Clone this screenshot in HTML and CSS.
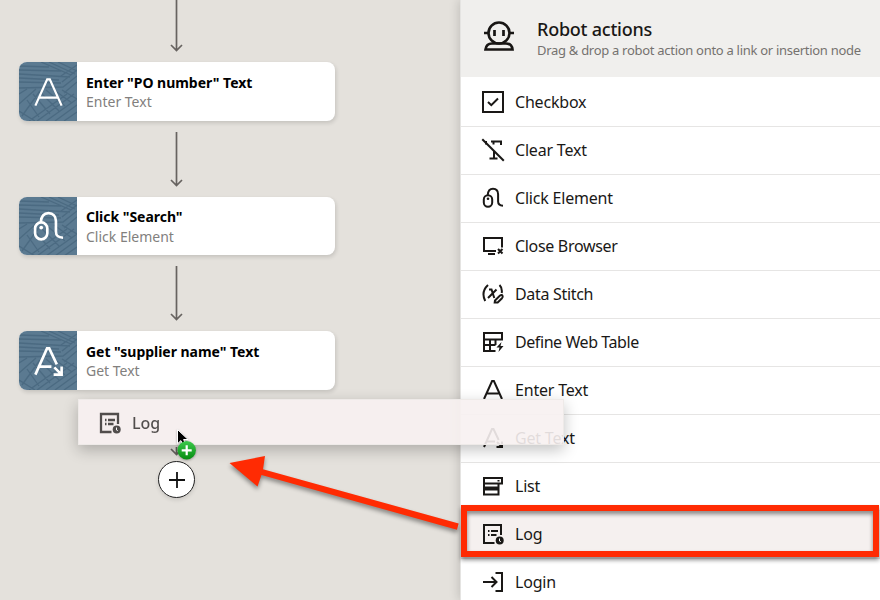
FILE: index.html
```
<!DOCTYPE html>
<html lang="en">
<head>
<meta charset="utf-8">
<title>Robot actions</title>
<link rel="stylesheet" href="styles.css">
</head>
<body>
<svg class="defs" aria-hidden="true">
  <defs>
    <symbol id="checkbox" viewBox="0 0 24 24"><path d="M2 2h20v20H2z"/><path d="m7 12 3.300 3.200L17 8.500"/></symbol>
    <symbol id="clear" viewBox="0 0 24 24"><path d="M1.300 1.300 22.800 22.800"/><path d="M10 3.500h11M20 3v4M12.500 3.500V6.500M13 13v7.500M8.500 20.500h8M5 3v3.500"/></symbol>
    <symbol id="mouse" viewBox="0 0 24 24"><rect x="2.800" y="9.200" width="8.400" height="11.600" rx="4.200"/><path d="M6.700 9.200C7 5 9 2.800 12 2.800c3.200 0 5.100 2.200 5.100 5.500v7.200c0 2.700 1.200 4 4.900 4.200"/><circle class="dot" cx="7" cy="12.700" r="1.300"/></symbol>
    <symbol id="browser" viewBox="0 0 24 24"><path d="M15 17H3V4h18v9.500M7 20h7M17 15l4.500 4.500m0-4.500L17 19.500"/></symbol>
    <symbol id="stitch" viewBox="0 0 24 24"><path d="M7 3C1.700 8 1.200 13 4.200 19M8 7.500h2.500l2.800 8.500M15.500 7.500 7 16M18.500 3c2 2 2.700 5 2.200 8"/><path d="m14 18.500 5-5c2.500-1.500 3.500 1 2 2.700l-4.300 4.300h-3z"/></symbol>
    <symbol id="table" viewBox="0 0 24 24"><path d="M14.500 21H3V3h18v6.500H3M3 15h11.500M9 9.500V21M14.500 9.500V15"/><path class="dot" d="M20.500 12 15.500 17.500h3L17.500 22l5-6h-3z"/></symbol>
    <symbol id="enter" viewBox="0 0 24 24"><path d="m3 21 8.100-18h1.800L21 21M6 15.500h12"/></symbol>
    <symbol id="gettext" viewBox="0 0 24 24"><path d="m3 21 8-18h1.500l5.200 11M6 15.500h8M16 16l5 5m0-5.500V21h-5.500"/></symbol>
    <symbol id="list" viewBox="0 0 24 24"><path d="M3 4h18v5.500H3zM3 9.500v11h14.500v-11"/><path class="dot" d="M3 12.500h14v4H3zM16.500 6h2v1.500h-2z"/></symbol>
    <symbol id="log" viewBox="0 0 24 24"><path d="M13.500 21H3V3h17v10M7 9h1.500M10 9h7M7 13h1.500M10 13h5.500"/><circle class="dot" cx="18.700" cy="18.500" r="4"/><path class="clock" d="M18.500 16.500V19l1.300.700"/></symbol>
    <symbol id="login" viewBox="0 0 24 24"><path d="M2 12h13.500M10.500 7l5 5-5 5M14.500 3H21v18h-6.500"/></symbol>
    <symbol id="weave" viewBox="0 0 58 59"><path d="M0 4l30 1M0 8l42 1M0 12l51 3M0 16l40 2M0 20l42 1M0 26l44-1 14-11M22 0l30 13M30 0l26 12M39 0l19 9M58 3 42 14M58 8 43 20M58 20 45 31M0 32l8-5M0 42l17-15M3 54 21 29M8 38l12 17M14 32l17 20M20 29l20 20M27 28l19 16M35 28l18 13M43 28l15 9M10 59l38-27M18 59l37-27M27 59l31-22M36 59l22-16M45 59l13-9M0 49l16 10"/></symbol>
  </defs>
</svg>
<main class="app">
  <section class="canvas">
    <svg class="link first" viewBox="0 0 14 55"><path d="M7.500 0v50M2 45l5.500 5.500L13 45"/></svg>
    <article class="node">
      <div class="tile"><svg class="weave"><use href="#weave"/></svg><svg class="icon"><use href="#enter"/></svg></div>
      <div class="label"><h3>Enter "PO number" Text</h3><p>Enter Text</p></div>
    </article>
    <svg class="link" viewBox="0 0 14 55"><path d="M7.500 0v53M2 48l5.500 5.500L13 48"/></svg>
    <article class="node">
      <div class="tile"><svg class="weave"><use href="#weave"/></svg><svg class="icon heavy"><use href="#mouse"/></svg></div>
      <div class="label"><h3>Click "Search"</h3><p>Click Element</p></div>
    </article>
    <svg class="link" viewBox="0 0 14 55"><path d="M7.500 0v53M2 48l5.500 5.500L13 48"/></svg>
    <article class="node">
      <div class="tile"><svg class="weave"><use href="#weave"/></svg><svg class="icon heavy"><use href="#gettext"/></svg></div>
      <div class="label"><h3>Get "supplier name" Text</h3><p>Get Text</p></div>
    </article>
    <svg class="link last" viewBox="0 0 14 55"><path d="M7.500 46v7M2 48l5.500 5.500L13 48"/></svg>
    <div class="insert"><svg viewBox="0 0 18 18"><path d="M9 1v16M1 9h16"/></svg></div>
  </section>
  <aside class="panel">
    <header class="head">
      <svg class="robot" viewBox="0 0 32 32"><circle cx="16" cy="13" r="10.500"/><path d="M1 13h4M27 13h4M2.500 29.500h27c-.5-4-2.700-6-6.500-6H9c-3.800 0-6 2-6.500 6z"/><path class="eyes" d="M11.500 10v6M20.500 10v6"/></svg>
      <div><h2>Robot actions</h2><p>Drag &amp; drop a robot action onto a link or insertion node</p></div>
    </header>
    <ul class="actions">
      <li><svg class="icon"><use href="#checkbox"/></svg><span>Checkbox</span></li>
      <li><svg class="icon"><use href="#clear"/></svg><span>Clear Text</span></li>
      <li><svg class="icon"><use href="#mouse"/></svg><span>Click Element</span></li>
      <li><svg class="icon"><use href="#browser"/></svg><span class="tight">Close Browser</span></li>
      <li><svg class="icon"><use href="#stitch"/></svg><span class="tight">Data Stitch</span></li>
      <li><svg class="icon"><use href="#table"/></svg><span class="tighter">Define Web Table</span></li>
      <li><svg class="icon"><use href="#enter"/></svg><span>Enter Text</span></li>
      <li><svg class="icon"><use href="#gettext"/></svg><span>Get Text</span></li>
      <li><svg class="icon"><use href="#list"/></svg><span>List</span></li>
      <li class="selected"><svg class="icon"><use href="#log"/></svg><span>Log</span></li>
      <li><svg class="icon"><use href="#login"/></svg><span>Login</span></li>
    </ul>
  </aside>
</main>
<div class="ghost"><svg class="icon"><use href="#log"/></svg><span>Log</span></div>
<svg class="cursor" viewBox="0 0 30 34">
  <defs><linearGradient id="green" x2="0" y2="1"><stop stop-color="#3cc84c"/><stop offset="1" stop-color="#058c10"/></linearGradient></defs>
  <path class="pointer" d="M4.500 1.500v14.300l3.400-3.200 2.300 4.800 2.600-1.200-2.200-4.700h4.500z"/>
  <circle class="badge" cx="13.700" cy="22.300" r="9.200"/><path class="plus" d="M13.700 17.300v10M8.700 22.300h10"/>
</svg>
<svg class="pull" viewBox="0 0 250 60"><path d="M3.500 13 39 6l-2 13.300 195.700 54.200-1.800 6.300L35.500 25 31.500 36.500z"/></svg>
<div class="outline"></div>
</body>
</html>
```
FILE: styles.css
```
* { box-sizing: border-box; }
body { margin: 0; width: 880px; height: 600px; overflow: hidden; position: relative; font-family: "Noto Sans", "Liberation Sans", sans-serif; color: #1a1816; }
h2, h3, p, ul { margin: 0; padding: 0; }
.defs { position: absolute; width: 0; height: 0; }
.app { display: grid; grid-template-columns: 460px 420px; height: 600px; overflow: hidden; }
.canvas { display: flex; flex-direction: column; align-items: flex-start; padding-left: 19px; background: #e4e1dc; }
.link { flex: none; width: 14px; height: 55px; margin: 11px 0 10px 150px; fill: none; stroke: #676360; stroke-width: 1.700; }
.link.first { margin: 0 0 7px 150px; }
.link.last { margin: 11px 0 5.500px 150px; }
.node { flex: none; display: flex; width: 316px; height: 58.500px; border-radius: 8px; overflow: hidden; background: #fff; box-shadow: 1px 2px 4px rgba(0,0,0,.14); }
.tile { position: relative; width: 58px; height: 100%; display: grid; place-items: center; background: #5b7a91; }
.weave { position: absolute; inset: 0; width: 58px; height: 59px; fill: none; stroke: #49687f; stroke-width: 1.300; opacity: .85; }
.icon { display: block; flex: none; width: 24px; height: 24px; fill: none; stroke: currentColor; stroke-width: 2; }
.dot { fill: currentColor; stroke: none; }
.clock { stroke: #fff; stroke-width: 1; }
.tile .icon { color: #fff; width: 35px; height: 35px; margin-top: 2px; z-index: 1; stroke-width: 1.500; }
.tile .icon.heavy { stroke-width: 1.800; }
.label { padding: 10.500px 0 0 9px; white-space: nowrap; }
.label h3 { font-size: 14px; line-height: 20px; font-weight: 700; color: #000; letter-spacing: -.03px; }
.label p { margin-top: -.500px; font-size: 14px; line-height: 19px; color: #82807e; }
.insert { flex: none; display: grid; place-items: center; width: 37px; height: 37px; margin-left: 139px; border: 1.200px solid #222; border-radius: 50%; background: #fff; box-shadow: 0 2px 4px rgba(0,0,0,.12); }
.insert svg { width: 18px; height: 18px; fill: none; stroke: #111; stroke-width: 1.800; }
.panel { background: #fff; border-left: 1px solid #e5e4e2; box-shadow: -1px 0 10px rgba(0,0,0,.16); overflow: hidden; }
.head { display: flex; height: 77px; padding: 20px 0 0 22px; background: #f0efed; white-space: nowrap; }
.head > div { margin-left: 22px; }
.robot { width: 32px; height: 32px; fill: none; stroke: #181614; stroke-width: 2.600; }
.eyes { stroke-width: 2.700; }
.head h2 { margin-top: -3px; font-size: 18px; line-height: 24px; font-weight: 500; letter-spacing: -.23px; }
.head p { font-size: 13px; line-height: 18px; color: #75726f; letter-spacing: -.29px; }
.actions { list-style: none; padding-top: 2px; }
.actions li { display: flex; align-items: center; height: 48px; padding: 0 0 2px 20px; border-bottom: 1px solid #e6e5e4; font-size: 16px; letter-spacing: -.2px; }
.actions span { margin-left: 10px; white-space: nowrap; }
.actions .tight { letter-spacing: -.32px; }
.actions .tighter { letter-spacing: -.42px; }
.actions .selected { background: #f5f0ef; }
.ghost { position: absolute; left: 78px; top: 399px; width: 486px; height: 46px; display: flex; align-items: center; padding: 1px 0 0 19px; border: 1px solid #eeeae8; background: rgba(247,241,241,.9); box-shadow: 0 5px 14px rgba(0,0,0,.24); font-size: 16px; }
.ghost .icon, .ghost span { opacity: .75; }
.ghost .icon { stroke-width: 2.300; }
.ghost span { margin-left: 10px; font-weight: 500; }
.cursor { position: absolute; left: 173px; top: 428px; width: 30px; height: 34px; filter: drop-shadow(0 1px 1px rgba(0,0,0,.3)); }
.pointer { fill: #000; stroke: #fff; stroke-width: 1; }
.badge { fill: url(#green); }
.plus { stroke: #fff; stroke-width: 2.200; fill: none; }
.pull { position: absolute; left: 226px; top: 450px; width: 250px; height: 60px; overflow: visible; filter: drop-shadow(0 3px 2px rgba(0,0,0,.4)); fill: #ff2b03; }
.outline { position: absolute; left: 461px; top: 505px; width: 418px; height: 52px; border: 6px solid #ff2b03; filter: drop-shadow(0 3px 2px rgba(0,0,0,.45)); }
```
